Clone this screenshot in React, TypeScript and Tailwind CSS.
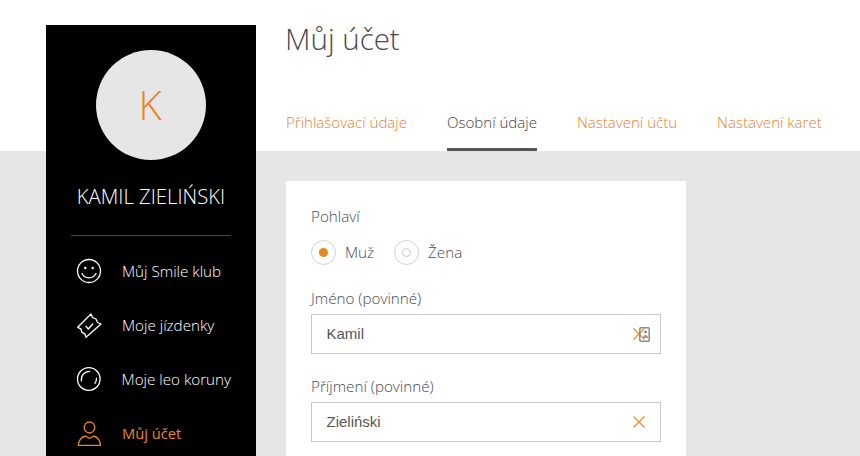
import { Fragment } from "react";

const tabs = [
  { label: "Přihlašovací údaje", active: false },
  { label: "Osobní údaje", active: true },
  { label: "Nastavení účtu", active: false },
  { label: "Nastavení karet", active: false },
];

const SmileIcon = () => (
  <svg width="26" height="26" viewBox="0 0 26 26" fill="none" stroke="currentColor" strokeWidth="1.3">
    <circle cx="13" cy="13" r="11.5" />
    <circle cx="9.3" cy="10" r="1.2" fill="currentColor" stroke="none" />
    <circle cx="16.7" cy="10" r="1.2" fill="currentColor" stroke="none" />
    <path d="M6 15.5c1.5 3 4 4.300 7 4.300s5.500-1.300 7-4.300" strokeLinecap="round" />
  </svg>
);

const TicketIcon = () => (
  <svg width="26" height="26" viewBox="0 0 26 26" fill="none" stroke="currentColor" strokeWidth="1.3" strokeLinejoin="round">
    <path d="M15 2 16.500 5.500 20 7 21.500 10.500 25 12 10 25.300 8.900 21.800 5.900 20.300 4.800 16.800 1.700 15.300Z" />
    <path d="m10 14.300 2.300 2.700 4.400-5" strokeLinecap="round" />
  </svg>
);

const CoinIcon = () => (
  <svg width="26" height="26" viewBox="0 0 26 26" fill="none" stroke="currentColor" strokeWidth="1.3">
    <circle cx="13" cy="13" r="11.5" />
    <path d="M5.500 15C4.800 9.500 8.500 5.200 14 5.200" strokeLinecap="round" />
    <path d="M20.800 12c.2 2-.3 3.800-1.500 5.300" strokeLinecap="round" />
  </svg>
);

const UserIcon = () => (
  <svg width="26" height="26" viewBox="0 0 26 26" fill="none" stroke="currentColor" strokeWidth="1.3" strokeLinejoin="round">
    <ellipse cx="13.500" cy="7.500" rx="5.300" ry="5.500" />
    <path d="M2.300 25.500c0-4.500 3-8.500 7-9.500l4.200 2.500 4.200-2.500c4 1 6.800 5 6.800 9.500Z" />
  </svg>
);

const menu = [
  { label: "Můj Smile klub", icon: <SmileIcon />, active: false },
  { label: "Moje jízdenky", icon: <TicketIcon />, active: false },
  { label: "Moje leo koruny", icon: <CoinIcon />, active: false },
  { label: "Můj účet", icon: <UserIcon />, active: true },
];

const ClearIcon = () => (
  <svg width="12" height="12" viewBox="0 0 12 12" stroke="#f28c28" strokeWidth="1.3" fill="none">
    <path d="M.5.5l11 11M11.500.5l-11 11" />
  </svg>
);

// browser autofill badge that sits on top of the clear button
const ContactBadge = () => (
  <svg width="11" height="15" viewBox="0 0 11 15" fill="none" className="absolute right-[10px] top-[12px]">
    <rect x=".8" y=".8" width="9.4" height="13.400" rx="1" stroke="#8a8a8a" strokeWidth="1.500" />
    <circle cx="6.500" cy="5" r="1.300" fill="#777" />
    <path d="M4 11c0-2 1-3 2.500-3S9 9 9 11Z" fill="#999" />
  </svg>
);

const Field = ({ label, value, badge }: { label: string; value: string; badge?: boolean }) => (
  <Fragment>
    <label className="block text-[15.2px] leading-[20px] font-light text-[#3f4a56] mb-[6px]">{label}</label>
    <div className="relative flex items-center justify-between h-[40px] w-[350px] border border-[#c8c8c8] pl-[15px] pr-[15px]">
      <span className="-ml-[0.5px] font-['Liberation_Sans',sans-serif] text-[15px] text-[#555]">{value}</span>
      <ClearIcon />
      {badge && <ContactBadge />}
    </div>
  </Fragment>
);

const Radio = ({ label, checked }: { label: string; checked: boolean }) => (
  <div className="flex items-center gap-[9px]">
    <span className="flex items-center justify-center w-[25px] h-[25px] rounded-full border border-[#d2d2d2]">
      {checked ? (
        <span className="w-[9px] h-[9px] rounded-full bg-[#e8871e]" />
      ) : (
        <span className="w-[9px] h-[9px] rounded-full border border-[#c8c8c8]" />
      )}
    </span>
    <span className="text-[15.2px] font-light text-[#3f4a56]">{label}</span>
  </div>
);

export default function App() {
  return (
    <div className="h-[456px] w-[860px] overflow-hidden flex pl-[46px] pt-[25px] font-['Open_Sans',sans-serif] bg-[linear-gradient(#fff_151px,#e6e6e6_151px)]">
      <aside className="w-[210px] h-[500px] shrink-0 bg-black px-[25px] pt-[25px]">
        <div className="flex items-center justify-center w-[110px] h-[110px] mx-auto rounded-full bg-[#e6e6e6] text-[40px] font-light text-[#e8871e]">
          <span className="-ml-[2px]">K</span>
        </div>
        <div className="mt-[22px] -mx-[10px] text-center text-[20.3px] leading-[28px] font-light text-white whitespace-nowrap">
          KAMIL ZIELIŃSKI
        </div>
        <div className="mt-[25px] mb-[22px] border-t border-[#444]" />
        <ul className="flex flex-col gap-[28px]">
          {menu.map((item) => (
            <li
              key={item.label}
              className={`flex items-center gap-[20px] pl-[5px] h-[26px] whitespace-nowrap ${item.active ? "font-normal text-[14.7px] text-[#e8871e]" : "font-light text-[15.2px] text-white"}`}
            >
              {item.icon}
              <span>{item.label}</span>
            </li>
          ))}
        </ul>
      </aside>

      <main className="ml-[30px] flex-1 min-w-0">
        <h1 className="-mt-[1px] -ml-[1px] text-[29.500px] leading-[30px] font-light text-[#4a4a4a] whitespace-nowrap">Můj účet</h1>
        <nav className="mt-[39px] flex gap-[40px] h-[58px]">
          {tabs.map((tab) => (
            <div
              key={tab.label}
              className={`pt-[19px] text-[15.05px] leading-[20px] font-light whitespace-nowrap border-b-[3px] ${tab.active ? "text-[#3f3f3f] border-[#555]" : "text-[#ea7f2e] border-transparent"}`}
            >
              {tab.label}
            </div>
          ))}
        </nav>
        <section className="mt-[30px] w-[400px] h-[400px] bg-white p-[25px]">
          <div className="text-[15.2px] leading-[20px] font-light text-[#3f4a56]">Pohlaví</div>
          <div className="mt-[14px] flex gap-[20px]">
            <Radio label="Muž" checked />
            <Radio label="Žena" checked={false} />
          </div>
          <div className="mt-[23px]">
            <Field label="Jméno (povinné)" value="Kamil" badge />
          </div>
          <div className="mt-[22px]">
            <Field label="Příjmení (povinné)" value="Zieliński" />
          </div>
        </section>
      </main>
    </div>
  );
}
